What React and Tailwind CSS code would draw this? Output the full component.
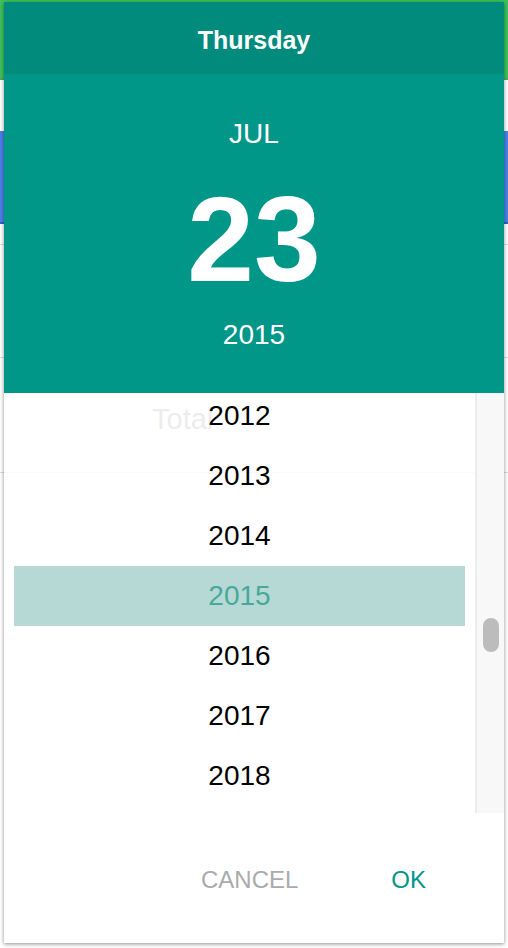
import React from "react";

const years = [2012, 2013, 2014, 2015, 2016, 2017, 2018];

function Background() {
  return (
    <div className="w-[508px] h-[948px] bg-white flex flex-col">
      <div className="h-[80px] bg-[#3dc15d] border-b-2 border-[#52a765]" />
      <div className="h-[51px]" />
      <div className="h-[93px] bg-[#4a80e8] border-b-2 border-[#2f63c9]" />
      <div className="h-[20px]" />
      <div className="h-[113px] border-t border-[#dcdcdc]" />
      <div className="h-[115px] border-t border-[#dcdcdc] pl-[152px] pt-[47px]">
        <span className="text-[29px] leading-[29px] text-[#7d7d7d]">Total</span>
      </div>
      <div className="flex-1 border-t border-[#dcdcdc]" />
    </div>
  );
}

export default function App() {
  return (
    <div className="relative w-[508px] h-[948px] overflow-hidden [font-family:'Liberation_Sans',Arial,sans-serif]">
      <Background />
      <div className="absolute left-[4px] top-[2px] w-[500px] h-[941px] flex flex-col shadow-[0_1px_4px_rgba(0,0,0,0.45)]">
        <div className="h-[72px] bg-[#018b7d] flex items-center justify-center pt-[4px]">
          <span className="text-white font-bold text-[25px] leading-[25px]">Thursday</span>
        </div>
        <div className="h-[319px] bg-[#009688] flex flex-col items-center text-white pt-[46px]">
          <div className="text-[28px] leading-[28px] h-[28px]">JUL</div>
          <div className="mt-[31px] text-[120px] leading-[120px] h-[120px] font-bold">23</div>
          <div className="mt-[22px] text-[28px] leading-[28px] h-[28px]">2015</div>
        </div>
        <div className="h-[420px] flex bg-white/85">
          <div className="flex-1 overflow-hidden pl-[10px] pr-[10px]">
            <div className="-mt-[7px] flex flex-col">
              {years.map((y) => (
                <div
                  key={y}
                  className={
                    y === 2015
                      ? "h-[60px] flex items-center justify-center bg-[#b6d9d5] text-[#47a99a] text-[28px]"
                      : "h-[60px] flex items-center justify-center text-black text-[28px]"
                  }
                >
                  {y}
                </div>
              ))}
            </div>
          </div>
          <div className="w-[29px] bg-[#f8f8f8] border-l-2 border-[#ececec] relative">
            <div className="absolute left-[6px] top-[225px] w-[16px] h-[34px] rounded-full bg-[#bcbcbc]" />
          </div>
        </div>
        <div className="flex-1 bg-white flex items-center justify-end pr-[78px] gap-[93px] pt-[4px]">
          <span className="text-[24px] leading-[24px] text-[#ababab]">CANCEL</span>
          <span className="text-[24px] leading-[24px] text-[#009688]">OK</span>
        </div>
      </div>
    </div>
  );
}
